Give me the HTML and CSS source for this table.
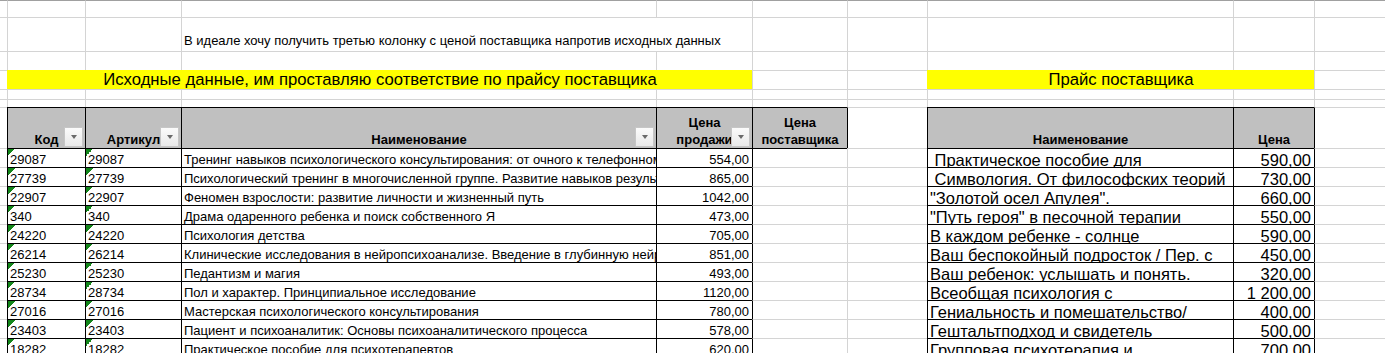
FILE: index.html
```html
<!DOCTYPE html>
<html lang="ru">
<head>
<meta charset="utf-8">
<title>Прайс</title>
<link rel="stylesheet" href="styles.css">
</head>
<body>
<div class="sheet">
  <!-- row 0 -->
  <div class="c top c0"></div><div class="c top"></div><div class="c top"></div><div class="c top"></div><div class="c top"></div><div class="c top"></div><div class="c top"></div><div class="c top"></div><div class="c top"></div><div class="c top"></div>
  <!-- row 1 -->
  <div class="c c0"></div><div class="c"></div><div class="c"></div>
  <div class="c note span2">В идеале хочу получить третью колонку с ценой поставщика напротив исходных данных</div>
  <div class="c"></div><div class="c"></div><div class="c"></div><div class="c"></div><div class="c"></div>
  <!-- row 2 -->
  <div class="c c0"></div><div class="c"></div><div class="c"></div><div class="c"></div><div class="c"></div><div class="c"></div><div class="c"></div><div class="c"></div><div class="c"></div><div class="c"></div>
  <!-- row 3 -->
  <div class="c c0"></div>
  <div class="c band span4">Исходные данные, им проставляю соответствие по прайсу поставщика</div>
  <div class="c"></div>
  <div class="c"></div>
  <div class="c band span2">Прайс поставщика</div>
  <div class="c"></div>
  <!-- row 4 -->
  <div class="c c0"></div><div class="c"></div><div class="c"></div><div class="c"></div><div class="c"></div><div class="c"></div><div class="c"></div><div class="c"></div><div class="c"></div><div class="c"></div>
  <!-- row 5 -->
  <div class="c c0"></div><div class="c"></div><div class="c"></div><div class="c"></div><div class="c"></div><div class="c"></div><div class="c"></div><div class="c"></div><div class="c"></div><div class="c"></div>
  <!-- row 6: headers -->
  <div class="c c0"></div>
  <div class="c hd"><span class="hd-text">Код</span><span class="filter"></span></div>
  <div class="c hd"><span class="hd-text">Артикул</span><span class="filter"></span></div>
  <div class="c hd"><span class="hd-text">Наименование</span><span class="filter"></span></div>
  <div class="c hd"><span class="hd-text">Цена<br>продажи</span><span class="filter"></span></div>
  <div class="c hd"><span class="hd-text">Цена<br>поставщика</span></div>
  <div class="c edge"></div>
  <div class="c hd"><span class="hd-text">Наименование</span></div>
  <div class="c hd"><span class="hd-text">Цена</span></div>
  <div class="c edge"></div>

  <!-- data rows -->
  <div class="c c0"></div><div class="c t flag">29087</div><div class="c t flag">29087</div><div class="c t">Тренинг навыков психологического консультирования: от очного к телефонному</div><div class="c t num">554,00</div><div class="c edge first"></div><div class="c"></div><div class="c r">&nbsp;Практическое пособие для</div><div class="c r num">590,00</div><div class="c edge"></div>
  <div class="c c0"></div><div class="c t flag">27739</div><div class="c t flag">27739</div><div class="c t">Психологический тренинг в многочисленной группе. Развитие навыков результативного общения</div><div class="c t num">865,00</div><div class="c edge"></div><div class="c"></div><div class="c r">&nbsp;Симвология. От философских теорий</div><div class="c r num">730,00</div><div class="c edge"></div>
  <div class="c c0"></div><div class="c t flag">22907</div><div class="c t flag">22907</div><div class="c t">Феномен взрослости: развитие личности и жизненный путь</div><div class="c t num">1042,00</div><div class="c edge"></div><div class="c"></div><div class="c r">"Золотой осел Апулея".</div><div class="c r num">660,00</div><div class="c edge"></div>
  <div class="c c0"></div><div class="c t flag">340</div><div class="c t flag">340</div><div class="c t">Драма одаренного ребенка и поиск собственного Я</div><div class="c t num">473,00</div><div class="c edge"></div><div class="c"></div><div class="c r">"Путь героя" в песочной терапии</div><div class="c r num">550,00</div><div class="c edge"></div>
  <div class="c c0"></div><div class="c t flag">24220</div><div class="c t flag">24220</div><div class="c t">Психология детства</div><div class="c t num">705,00</div><div class="c edge"></div><div class="c"></div><div class="c r">В каждом ребенке - солнце</div><div class="c r num">590,00</div><div class="c edge"></div>
  <div class="c c0"></div><div class="c t flag">26214</div><div class="c t flag">26214</div><div class="c t">Клинические исследования в нейропсихоанализе. Введение в глубинную нейропсихологию</div><div class="c t num">851,00</div><div class="c edge"></div><div class="c"></div><div class="c r">Ваш беспокойный подросток / Пер. с</div><div class="c r num">450,00</div><div class="c edge"></div>
  <div class="c c0"></div><div class="c t flag">25230</div><div class="c t flag">25230</div><div class="c t">Педантизм и магия</div><div class="c t num">493,00</div><div class="c edge"></div><div class="c"></div><div class="c r">Ваш ребенок: услышать и понять.</div><div class="c r num">320,00</div><div class="c edge"></div>
  <div class="c c0"></div><div class="c t flag">28734</div><div class="c t flag">28734</div><div class="c t">Пол и характер. Принципиальное исследование</div><div class="c t num">1120,00</div><div class="c edge"></div><div class="c"></div><div class="c r">Всеобщая психология с</div><div class="c r num">1 200,00</div><div class="c edge"></div>
  <div class="c c0"></div><div class="c t flag">27016</div><div class="c t flag">27016</div><div class="c t">Мастерская психологического консультирования</div><div class="c t num">780,00</div><div class="c edge"></div><div class="c"></div><div class="c r">Гениальность и помешательство/</div><div class="c r num">400,00</div><div class="c edge"></div>
  <div class="c c0"></div><div class="c t flag">23403</div><div class="c t flag">23403</div><div class="c t">Пациент и психоаналитик: Основы психоаналитического процесса</div><div class="c t num">578,00</div><div class="c edge"></div><div class="c"></div><div class="c r">Гештальтподход и свидетель</div><div class="c r num">500,00</div><div class="c edge"></div>
  <div class="c c0"></div><div class="c t flag">18282</div><div class="c t flag">18282</div><div class="c t">Практическое пособие для психотерапевтов</div><div class="c t num">620,00</div><div class="c edge"></div><div class="c"></div><div class="c r">Групповая психотерапия и</div><div class="c r num">700,00</div><div class="c edge"></div>
</div>
</body>
</html>
```

FILE: styles.css
```css
html, body {
  margin: 0;
  padding: 0;
  background: #ffffff;
  overflow: hidden;
}

.sheet {
  display: grid;
  grid-template-columns: 7px 78px 96px 475px 96px 95px 80px 306px 81px 71px;
  grid-template-rows: 17px 34px 19px 19px 10px 8px 41px repeat(11, 19px);
  width: 1385px;
  font-family: "Liberation Sans", Arial, sans-serif;
  color: #000000;
}

.c {
  box-sizing: border-box;
  border-top: 1px solid #d4d4d4;
  border-left: 1px solid #d4d4d4;
  overflow: hidden;
  white-space: pre;
  min-width: 0;
}

.c0 { border-left: 0; }
.top { border-top-color: #a0a0a0; }

.span2 { grid-column: span 2; }
.span4 { grid-column: span 4; }

.note {
  display: flex;
  align-items: flex-end;
  padding: 0 0 3px 2px;
  font-size: 13px;
  line-height: 14px;
}

.band {
  background: #ffff00;
  border-color: #ffff00;
  display: flex;
  align-items: center;
  justify-content: center;
  font-size: 16.7px;
  line-height: 18px;
}

/* header cells */
.hd {
  background: #c0c0c0;
  border-top-color: #000000;
  border-left-color: #000000;
  display: grid;
  padding: 0 2px 0 0;
}
.hd-text {
  grid-area: 1 / 1;
  align-self: end;
  justify-self: center;
  text-align: center;
  font-weight: bold;
  font-size: 13px;
  line-height: 16.5px;
  padding: 0 0 0 2px;
}
.filter {
  grid-area: 1 / 1;
  align-self: end;
  justify-self: end;
  box-sizing: border-box;
  width: 19px;
  height: 20px;
  border: 1px solid #c6c6c6;
  background: linear-gradient(#fbfbfb, #e9e9e9);
  display: flex;
  align-items: center;
  justify-content: center;
  margin-bottom: 1px;
}
.filter::after {
  content: "";
  width: 0;
  height: 0;
  border-left: 3.5px solid transparent;
  border-right: 3.5px solid transparent;
  border-top: 4px solid #6a6a6a;
}

.edge { border-left-color: #000000; }
.edge.first { border-top-color: #000000; }

/* left table data */
.t {
  border-top-color: #000000;
  border-left-color: #000000;
  display: flex;
  align-items: flex-end;
  padding: 0 3px 0 2px;
  font-size: 13px;
  line-height: 14px;
}
.flag {
  background: linear-gradient(135deg, #13861a 50%, transparent 50%) no-repeat 0 0 / 7px 7px;
}

/* right table data */
.r {
  border-top-color: #000000;
  border-left-color: #000000;
  display: flex;
  align-items: flex-end;
  padding: 0 3px 0 2px;
  font-size: 16.5px;
  line-height: 13px;
}

.num { justify-content: flex-end; }
```
